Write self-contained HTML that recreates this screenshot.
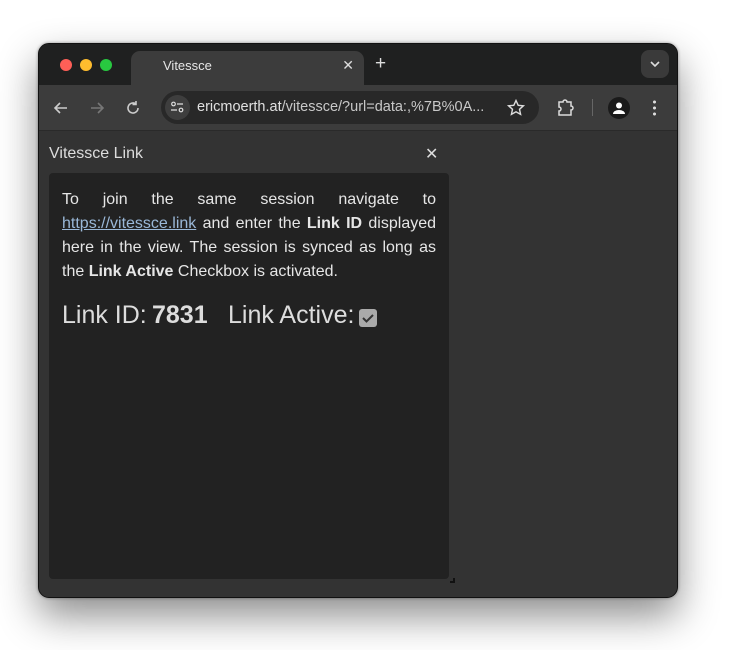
<!DOCTYPE html>
<html><head><style>
*{margin:0;padding:0;box-sizing:border-box}
body{width:730px;height:650px;background:#fff;position:relative;overflow:hidden;font-family:"Liberation Sans",sans-serif}
.win{position:absolute;left:38px;top:43px;width:640px;height:555px;border-radius:11px;background:#333;overflow:hidden;border:1px solid #111;box-shadow:0 18px 40px rgba(0,0,0,.45),0 0 3px rgba(0,0,0,.4)}
.tabbar{position:absolute;left:0;top:0;width:100%;height:41px;background:#1f2020}
.dot{position:absolute;top:15px;width:12px;height:12px;border-radius:50%}
.tab{position:absolute;left:92px;top:7px;width:233px;height:34px;background:#3c3c3c;border-radius:9px 9px 0 0}
.tab span{position:absolute;left:32px;top:7px;color:#e6e6e6;font-size:13px}
.tab b{position:absolute;right:10px;top:6px;color:#ddd;font-weight:normal;font-size:14px}
.plus{position:absolute;left:336px;top:9px;color:#ddd;font-size:19px}
.chev{position:absolute;right:8px;top:6px;width:28px;height:28px;border-radius:8px;background:#3a3a3a}
.tool{position:absolute;left:0;top:41px;width:100%;height:46px;background:#3c3c3c;border-bottom:1px solid #2a2a2a}
.omni{position:absolute;left:122px;top:6px;width:378px;height:33px;border-radius:17px;background:#282828}
.omni .ic{position:absolute;left:4px;top:4px;width:25px;height:25px;border-radius:50%;background:#3e3e3e}
.omni .url{position:absolute;left:36px;top:8px;font-size:14.5px;color:#e0e0e0;white-space:nowrap}
.content{position:absolute;left:0;top:88px;width:100%;bottom:0;background:#333}
.title{position:absolute;left:10px;top:13px;color:#ddd;font-size:16px}
.x{position:absolute;left:386px;top:12px;color:#ddd;font-size:16px}
.panel{position:absolute;left:10px;top:41px;width:400px;height:406px;background:#222;border-radius:4px}
.txt{position:absolute;left:13px;top:15px;width:374px;color:#e6e6e6;font-size:16px;line-height:24px;text-align:justify}
.txt a{color:#9ab8d8;text-decoration:underline}
.big{position:absolute;top:128px;color:#ddd;font-size:25px;white-space:nowrap}
.cb{position:absolute;left:310px;top:136px;width:18px;height:18px;background:#aaa;border-radius:3px}
</style></head><body>
<div class="win">
 <div class="tabbar">
  <div class="dot" style="left:21px;background:#fe5f57"></div>
  <div class="dot" style="left:41px;background:#febc2e"></div>
  <div class="dot" style="left:61px;background:#28c840"></div>
  <div class="tab"><span>Vitessce</span><b>✕</b></div>
  <div class="plus">+</div>
  <div class="chev"><svg width="28" height="28"><path d="M10 12l4 4 4-4" stroke="#ddd" stroke-width="1.6" fill="none"/></svg></div>
 </div>
 <div class="tool">
  <svg style="position:absolute;left:12px;top:13px" width="20" height="20"><path d="M16 10H4M9 5L4 10l5 5" stroke="#ccc" stroke-width="1.6" fill="none"/></svg>
  <svg style="position:absolute;left:48px;top:13px" width="20" height="20"><path d="M4 10h12M11 5l5 5-5 5" stroke="#777" stroke-width="1.6" fill="none"/></svg>
  <svg style="position:absolute;left:84px;top:13px" width="20" height="20"><path d="M15 10a5 5 0 1 1-2-4M13 3v3.5h-3.5" stroke="#ccc" stroke-width="1.6" fill="none"/></svg>
  <div class="omni"><div class="ic"><svg width="25" height="25"><circle cx="8.5" cy="9" r="1.8" stroke="#ddd" fill="none" stroke-width="1.2"/><path d="M12 9h6M6 15h6" stroke="#ddd" stroke-width="1.2"/><circle cx="16" cy="15" r="1.8" stroke="#ddd" fill="none" stroke-width="1.2"/></svg></div>
   <div class="url">ericmoerth.at<span style="color:#c8c8c8">/vitessce/?url=data:,%7B%0A...</span></div>
   <svg style="position:absolute;left:345px;top:7px" width="20" height="20"><path d="M10 2.5l2.2 4.8 5.2.5-3.9 3.5 1.1 5.1L10 13.8l-4.6 2.6 1.1-5.1L2.6 7.8l5.2-.5z" stroke="#ddd" stroke-width="1.4" fill="none"/></svg>
  </div>
  <svg style="position:absolute;left:517px;top:12px" width="20" height="22"><path d="M3 5h4a2 2 0 0 1 4 0h4v4a2 2 0 0 1 0 4v5H3v-4a2 2 0 0 0 0-4z" stroke="#ddd" stroke-width="1.5" fill="none"/></svg>
  <div style="position:absolute;left:553px;top:14px;width:1px;height:17px;background:#666"></div>
  <div style="position:absolute;left:569px;top:12px;width:22px;height:22px;border-radius:50%;background:#1a1a1a"><svg width="22" height="22"><circle cx="11" cy="8.5" r="3" fill="#fff"/><path d="M5 17a6 4 0 0 1 12 0z" fill="#fff"/></svg></div>
  <div style="position:absolute;left:614px;top:14px;width:3px;height:18px;background:radial-gradient(circle,#ddd 1.4px,transparent 1.6px) 0 0/3px 6px"></div>
 </div>
 <div class="content">
  <div class="title">Vitessce Link</div>
  <div class="x">✕</div>
  <div class="panel">
   <div class="txt">To join the same session navigate to <a>https://vitessce.link</a> and enter the <b>Link ID</b> displayed here in the view. The session is synced as long as the <b>Link Active</b> Checkbox is activated.</div>
   <div class="big" style="left:13px">Link ID:</div>
   <div class="big" style="left:103px;font-weight:bold">7831</div>
   <div class="big" style="left:179px">Link Active:</div>
   <div class="cb"><svg width="18" height="18"><path d="M4 9l3.5 3.5L14 6" stroke="#333" stroke-width="2" fill="none"/></svg></div>
  </div>
  <div style="position:absolute;left:411px;top:446px;width:5px;height:5px;border-right:2px solid #111;border-bottom:2px solid #111"></div>
 </div>
</div>
</body></html>
